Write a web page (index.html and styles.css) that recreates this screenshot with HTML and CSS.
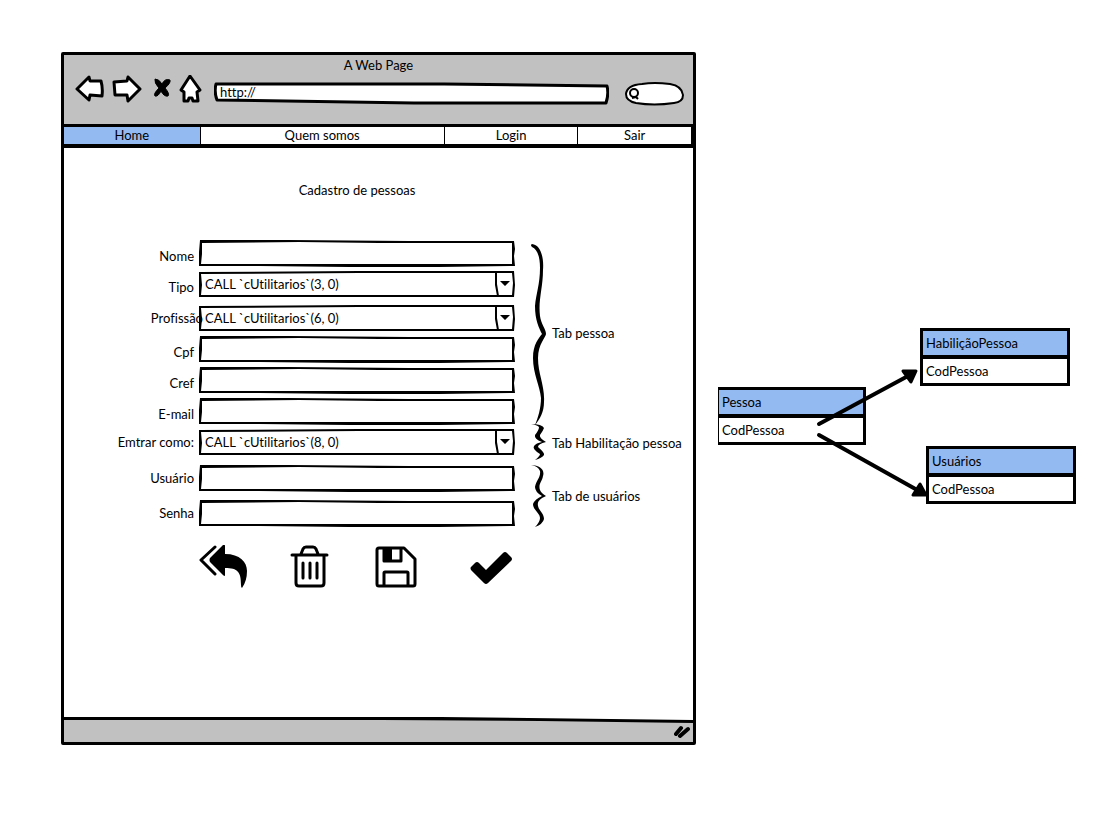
FILE: index.html
```html
<!DOCTYPE html>
<html lang="pt-BR">
<head>
<meta charset="utf-8">
<title>Cadastro de pessoas</title>
<link rel="stylesheet" href="styles.css">
</head>
<body>
<svg class="defs" aria-hidden="true">
  <symbol id="box" viewBox="0 0 316 27" preserveAspectRatio="none">
    <path fill-rule="evenodd" d="M1 0 L90 0 L210 1 L315 1 L316 9 L315 16 L316 26 L240 27 L150 27 L60 26 L0 26 L0 12 Z M3 3 L3 14 L2 24 L60 24 L160 24 L313 24 L313 14 L313 3 L180 3 L100 2 Z"/>
  </symbol>
  <symbol id="combo" viewBox="0 0 316 27" preserveAspectRatio="none">
    <path fill-rule="evenodd" d="M0 1 L160 0 L315 0 L316 14 L315 26 L150 26 L0 26 L0 14 Z M2 3 L3 14 L2 24 L160 24 L313 24 L314 12 L313 2 L160 2 Z"/>
    <path d="M296 2 L298 2 L298 13 L300 25 L298 25 L296 14 Z M301 10 L311 10 L306 15 Z"/>
  </symbol>
</svg>
<main class="canvas">
  <section class="window">
    <header class="chrome">
      <p class="chrome-title">A Web Page</p>
      <div class="toolbar">
        <button class="tool" type="button" aria-label="Voltar"><svg width="29" height="28" viewBox="0 0 29 28"><path d="M2 14 L14 2 L15 6 L26 6 Q28 13 27 21 L15 20 L14 25 Z"/></svg></button>
        <button class="tool tool-next" type="button" aria-label="Avançar"><svg width="30" height="28" viewBox="0 0 30 28"><path d="M2 7 L15 6 L16 2 L28 14 L16 26 L15 20 L3 20 Z"/></svg></button>
        <button class="tool tool-stop" type="button" aria-label="Parar"><svg width="18" height="28" viewBox="0 0 18 28"><path class="solid" d="M2 4 Q6 4 9 9 Q12 3 17 5 Q18 8 12 13 Q17 19 15 21 Q11 22 8 16 Q5 22 2 21 Q0 19 6 13 Q1 8 2 4 Z"/></svg></button>
        <button class="tool tool-home" type="button" aria-label="Início"><svg width="23" height="28" viewBox="0 0 23 28"><path d="M11 1 L21 15 L18 17 L19 26 L14 26 L13 23 L10 23 L9 26 L5 26 L5 17 L2 15 Z"/></svg></button>
        <label class="address"><svg viewBox="0 0 395 23" preserveAspectRatio="none"><path d="M2 2 L230 2 L393 4 Q395 12 392 21 L200 21 L3 18 Q0 10 2 2 Z"/></svg><input type="text" value="http://" aria-label="Endereço"></label>
        <label class="search"><svg viewBox="0 0 60 25"><path d="M2 13 Q3 4 18 3 Q30 1 46 3 Q58 5 59 14 Q59 21 50 22 Q30 25 12 22 Q2 20 2 13 Z"/><circle cx="10" cy="12" r="4"/><path d="M12 16 L14 18 M8 17 L12 16"/></svg><input type="search" aria-label="Buscar"></label>
      </div>
    </header>
    <nav class="menu">
      <a class="active" href="#home">Home</a>
      <a href="#quem">Quem somos</a>
      <a href="#login">Login</a>
      <a href="#sair">Sair</a>
    </nav>
    <form class="form">
      <h1>Cadastro de pessoas</h1>
      <div class="group">
        <div class="fields">
          <label for="nome">Nome</label><div class="control"><svg><use href="#box"/></svg><input id="nome" type="text"></div>
          <label for="tipo">Tipo</label><div class="control"><svg><use href="#combo"/></svg><select id="tipo"><option>CALL `cUtilitarios`(3, 0)</option></select></div>
          <label class="wide spaced" for="profissao">Profissão</label><div class="control spaced"><svg><use href="#combo"/></svg><select id="profissao"><option>CALL `cUtilitarios`(6, 0)</option></select></div>
          <label for="cpf">Cpf</label><div class="control"><svg><use href="#box"/></svg><input id="cpf" type="text"></div>
          <label for="cref">Cref</label><div class="control"><svg><use href="#box"/></svg><input id="cref" type="text"></div>
          <label for="email">E-mail</label><div class="control"><svg><use href="#box"/></svg><input id="email" type="text"></div>
        </div>
        <div class="note">
          <svg width="24" height="185" viewBox="528 240 24 185"><path d="M532 244 C541 245 544 258 543 270 C543 288 538 300 540 316 C541 324 546 329 546 334 C546 337 538 344 538 358 C538 374 545 386 544 402 C544 412 540 419 535 425 C538 418 541 408 541 398 C540 386 533 374 533 358 C533 344 539 338 542 334 C539 328 535 320 535 306 C536 294 540 284 540 268 C540 256 537 249 532 247 Q530 245 532 244 Z"/></svg>
          <span>Tab pessoa</span>
        </div>
      </div>
      <div class="group group-role">
        <div class="fields">
          <label for="papel">Emtrar como:</label><div class="control"><svg><use href="#combo"/></svg><select id="papel"><option>CALL `cUtilitarios`(8, 0)</option></select></div>
        </div>
        <div class="note">
          <svg width="24" height="37" viewBox="528 424 24 37"><path d="M531 424 Q542 424 544 428 Q543 431 540 435 Q539 438 546 442 Q538 444 538 447 Q545 453 544 455 Q542 458 535 460 Q540 456 540 454 Q532 449 534 446 Q536 443 542 442 Q534 439 535 435 Q539 430 539 427 Q537 425 531 424 Z"/></svg>
          <span>Tab Habilitação pessoa</span>
        </div>
      </div>
      <div class="group group-user">
        <div class="fields">
          <label for="usuario">Usuário</label><div class="control"><svg><use href="#box"/></svg><input id="usuario" type="text"></div>
          <label for="senha">Senha</label><div class="control"><svg><use href="#box"/></svg><input id="senha" type="password"></div>
        </div>
        <div class="note">
          <svg width="24" height="62" viewBox="528 465 24 62"><path d="M531 465 C540 465 545 470 543 476 C542 482 538 484 540 490 Q541 493 546 496 C540 499 537 501 538 506 C539 511 544 513 544 519 Q543 524 535 527 Q540 522 540 518 C540 513 533 510 533 504 Q535 499 542 496 Q535 492 535 487 C536 481 541 477 540 471 Q538 466 531 465 Z"/></svg>
          <span>Tab de usuários</span>
        </div>
      </div>
      <div class="actions">
        <button type="button" aria-label="Voltar"><svg viewBox="199 545 48 44"><path d="M225 546 V554 C240 554 247 562 247 571 Q247 581 242 588 Q241 588 241 585 C241 572 238 568 225 568 V575 Q225 577 223 575 L210 562 Q209 560 210 558 L223 545 Q225 544 225 546 Z"/><path class="line" d="M215 547 L201 560 L215 574"/></svg></button>
        <button type="button" aria-label="Excluir"><svg viewBox="286 545 48 44"><path class="line" d="M292 555 H327 M301 554 L303 549 Q304 547 306 547 H313 Q315 547 316 549 L318 554 M296 555 V583 Q296 586 299 586 H321 Q324 586 324 583 V555 M303 563 V578 M310 563 V578 M317 563 V578"/></svg></button>
        <button type="button" aria-label="Salvar"><svg viewBox="372 545 48 44"><path class="line" d="M379 548 H404 L415 559 V584 Q415 586 413 586 H379 Q377 586 377 584 V550 Q377 548 379 548 Z M384 548 V561 H401 V548 M384 586 V573 Q384 572 385 572 H407 Q408 572 408 573 V586"/><path d="M384 549 H392 V561 H384 Z"/></svg></button>
        <button type="button" aria-label="Confirmar"><svg viewBox="467 545 48 44"><path d="M471 567 L475 563 Q477 561 479 563 L486 570 L503 553 Q505 551 507 553 L511 557 Q513 559 511 561 L488 583 Q486 585 484 583 L471 570 Q470 568 471 567 Z"/></svg></button>
      </div>
    </form>
    <footer class="status"><svg class="edge" viewBox="0 0 634 8" preserveAspectRatio="none"><path class="paper" d="M0 0 H634 V4 L320 0 Z"/><path d="M0 0 L380 0 L634 3 V6 L480 4 L320 3 L0 3 Z"/></svg><svg class="grip" width="16" height="14" viewBox="0 0 16 14"><path d="M2 9 L7 3 M6 11 L14 4"/></svg></footer>
  </section>
  <section class="diagram" aria-label="Tabelas">
    <div class="entity entity-person"><h2>Pessoa</h2><p>CodPessoa</p></div>
    <div class="entity entity-role"><h2>HabiliçãoPessoa</h2><p>CodPessoa</p></div>
    <div class="entity entity-user"><h2>Usuários</h2><p>CodPessoa</p></div>
    <svg class="arrows" width="358" height="176" viewBox="718 328 358 176"><path class="shaft" d="M819 424 L908 376 M819 435 L919 491"/><path class="head" d="M903 371 L916 371 L911 382 Z M913 495 L926 495 L920 484 Z"/></svg>
  </section>
</main>
</body>
</html>
```

FILE: styles.css
```css
* { box-sizing: border-box; }
body {
  margin: 0;
  background: #fff;
  color: #000;
  font: 13px/20px Lato, "Noto Sans", sans-serif;
  font-variant-ligatures: none;
}
.defs { position: absolute; width: 0; height: 0; }
button, input, select { font: inherit; color: inherit; }
button { display: block; padding: 0; border: 0; background: none; }
svg { display: block; }

.canvas {
  display: grid;
  grid-template-columns: 635fr 358fr;
  column-gap: 22px;
  align-items: start;
  padding: 52px 26px 52px 61px;
}

.window { border: 3px solid #000; border-radius: 2px; }
.chrome { background: #c1c1c1; padding-bottom: 18px; }
.chrome-title { margin: 0; text-align: center; }
.toolbar { display: flex; align-items: flex-start; padding: 0 9px 0 11px; }
.tool { flex: none; }
.tool svg { fill: #fff; stroke: #000; stroke-width: 3; stroke-linejoin: round; }
.tool .solid { fill: #000; stroke-width: 1; }
.tool-next { margin-left: 8px; }
.tool-stop { margin-left: 11px; }
.tool-home { margin-left: 8px; }
.address { position: relative; flex: 1; height: 23px; margin: 7px 15px 0 12px; }
.search { position: relative; flex: none; width: 60px; height: 25px; margin-top: 6px; }
.address svg, .search svg {
  position: absolute;
  inset: 0;
  width: 100%;
  height: 100%;
  fill: #fff;
  stroke: #000;
  stroke-width: 3;
  stroke-linejoin: round;
}
.search svg { stroke-width: 2; }
.address input, .search input {
  position: relative;
  display: block;
  width: 100%;
  height: 20px;
  padding: 0 6px;
  border: 0;
  outline: 0;
  background: none;
}
.search input { padding-left: 18px; }

.menu {
  display: grid;
  grid-template-columns: 136fr 245fr 134fr 114fr;
  border: solid #000;
  border-width: 3px 2px 4px 0;
}
.menu a {
  line-height: 17px;
  text-align: center;
  color: inherit;
  text-decoration: none;
  border-left: 1px solid #000;
}
.menu .active { background: #94baf2; border-left: 0; }

.form { padding: 32px 0 128px; }
h1 {
  margin: 0 178px 40px 135px;
  font: inherit;
  text-align: center;
}
.group { display: grid; grid-template-columns: 451fr 178fr; }
.group-role { margin-top: 4px; }
.group-user { margin-top: 9px; }
.fields {
  display: grid;
  grid-template-columns: 135fr 316fr;
  row-gap: 4px;
}
.group-user .fields { row-gap: 8px; }
.fields label { padding: 6px 5px 0 0; text-align: right; white-space: nowrap; height: 27px; }
.fields .wide { position: relative; z-index: 1; margin-right: -9px; padding-top: 3px; }
.group-role .fields label, .group-user .fields label { padding-top: 3px; }
.fields .spaced { margin-top: 3px; }
.control { position: relative; height: 27px; }
.control svg { position: absolute; inset: 0; width: 100%; height: 100%; pointer-events: none; }
.control input, .control select {
  display: block;
  width: 100%;
  height: 25px;
  padding: 0 24px 0 6px;
  border: 0;
  outline: 0;
  background: none;
  appearance: none;
}
.note {
  display: flex;
  align-items: center;
  padding-left: 13px;
  white-space: nowrap;
}
.group-role .note { height: 27px; }
.note svg { flex: none; }
.actions {
  display: grid;
  grid-template-columns: 87px 86px 95px 48px;
  margin: 18px 0 0 135px;
}
.actions svg { width: 48px; height: 44px; }
.line { fill: none; stroke: #000; stroke-width: 3; stroke-linecap: round; stroke-linejoin: round; }

.status { position: relative; height: 25px; background: #c1c1c1; }
.edge { width: 100%; height: 8px; }
.paper { fill: #fff; }
.grip { position: absolute; right: 3px; bottom: 3px; fill: none; stroke: #000; stroke-width: 4; stroke-linecap: round; }

.diagram { position: relative; height: 176px; margin-top: 276px; }
.entity { position: absolute; width: 150px; border: 3px solid #000; }
.entity h2, .entity p { margin: 0; padding: 0 3px; font: inherit; line-height: 24px; }
.entity h2 { background: #94baf2; border-bottom: 4px solid #000; }
.entity-person { left: 0; top: 59px; width: 148px; border-left: 1px solid #000; }
.entity-role { left: 202px; top: 0; }
.entity-user { left: 208px; top: 118px; }
.arrows { position: absolute; left: 0; top: 0; }
.shaft { fill: none; stroke: #000; stroke-width: 4; stroke-linecap: round; }
.head { stroke: #000; stroke-width: 3; stroke-linejoin: round; }
```
